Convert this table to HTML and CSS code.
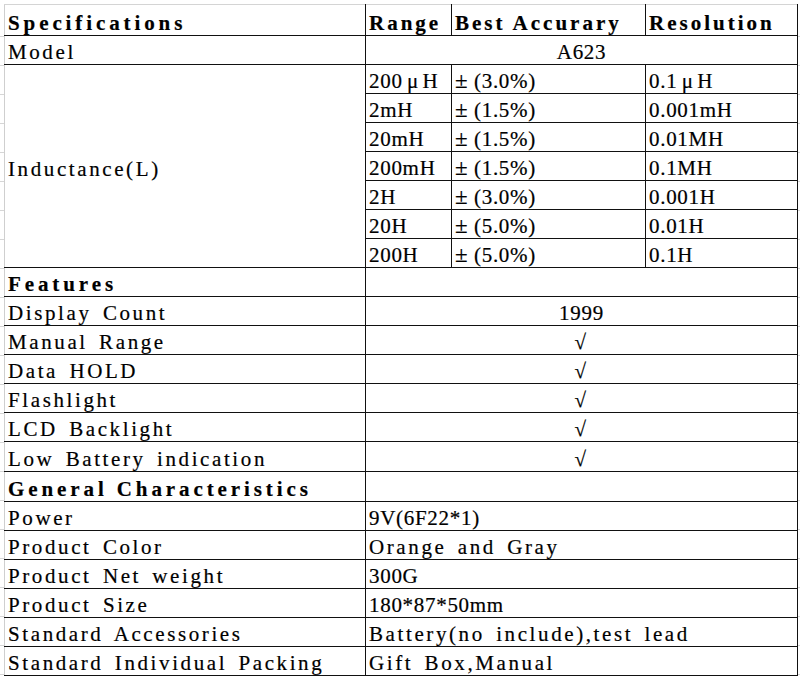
FILE: index.html
```html
<!DOCTYPE html>
<html lang="en">
<head>
<meta charset="utf-8">
<title>Specifications</title>
<link rel="stylesheet" href="styles.css">
</head>
<body>
<div class="sheet">
<table class="spec">
  <colgroup>
    <col class="c-a"><col class="c-b"><col class="c-c"><col class="c-d">
  </colgroup>
  <tr class="head">
    <th class="first">Specifications</th><th class="sub">Range</th><th class="sub">Best Accurary</th><th class="sub">Resolution</th>
  </tr>
  <tr><td class="first">Model</td><td colspan="3" class="center num">A623</td></tr>
  <tr><td class="first middle" rowspan="7">Inductance(L)</td><td class="num">200<span class="wide">μ</span>H</td><td class="num"><span class="pm">±</span>(3.0%)</td><td class="num">0.1<span class="wide">μ</span>H</td></tr>
  <tr><td class="num">2mH</td><td class="num"><span class="pm">±</span>(1.5%)</td><td class="num">0.001mH</td></tr>
  <tr><td class="num">20mH</td><td class="num"><span class="pm">±</span>(1.5%)</td><td class="num">0.01MH</td></tr>
  <tr><td class="num">200mH</td><td class="num"><span class="pm">±</span>(1.5%)</td><td class="num">0.1MH</td></tr>
  <tr><td class="num">2H</td><td class="num"><span class="pm">±</span>(3.0%)</td><td class="num">0.001H</td></tr>
  <tr><td class="num">20H</td><td class="num"><span class="pm">±</span>(5.0%)</td><td class="num">0.01H</td></tr>
  <tr><td class="num">200H</td><td class="num"><span class="pm">±</span>(5.0%)</td><td class="num">0.1H</td></tr>
  <tr><th class="first">Features</th><td colspan="3"></td></tr>
  <tr><td class="first">Display Count</td><td colspan="3" class="center num">1999</td></tr>
  <tr><td class="first">Manual Range</td><td colspan="3" class="center check">√</td></tr>
  <tr><td class="first">Data HOLD</td><td colspan="3" class="center check">√</td></tr>
  <tr><td class="first">Flashlight</td><td colspan="3" class="center check">√</td></tr>
  <tr><td class="first">LCD Backlight</td><td colspan="3" class="center check">√</td></tr>
  <tr class="tall"><td class="first">Low Battery indication</td><td colspan="3" class="center check">√</td></tr>
  <tr class="tall"><th class="first">General Characteristics</th><td colspan="3"></td></tr>
  <tr><td class="first">Power</td><td colspan="3" class="num">9V(6F22*1)</td></tr>
  <tr><td class="first">Product Color</td><td colspan="3">Orange and Gray</td></tr>
  <tr><td class="first">Product Net weight</td><td colspan="3" class="num">300G</td></tr>
  <tr><td class="first">Product Size</td><td colspan="3" class="num">180*87*50mm</td></tr>
  <tr><td class="first">Standard Accessories</td><td colspan="3">Battery(no include),test lead</td></tr>
  <tr><td class="first">Standard Individual Packing</td><td colspan="3">Gift Box,Manual</td></tr>
</table>
</div>
</body>
</html>
```

FILE: styles.css
```css
html, body {
  margin: 0;
  padding: 0;
  background: #ffffff;
}

.sheet {
  width: 800px;
  height: 681px;
  overflow: hidden;
  padding: 4px 0 0 4px;
  box-sizing: border-box;
  background-color: #ffffff;
  background-image: repeating-linear-gradient(180deg, transparent 0, transparent 28px, #d6d6d6 28px, #d6d6d6 29px);
  background-position: 0 8px;
}

.spec {
  border-collapse: collapse;
  table-layout: fixed;
  width: 793px;
  background: #ffffff;
  font-family: "Liberation Serif", "Noto Sans CJK SC", serif;
  font-size: 21px;
  color: #000;
  -webkit-text-stroke: 0.2px #000;
}

.c-a { width: 361px; }
.c-b { width: 86px; }
.c-c { width: 194px; }
.c-d { width: 152px; }

.spec td,
.spec th {
  height: 26px;
  padding: 0 0 2px 3px;
  border: 1px solid #111;
  line-height: 20px;
  vertical-align: bottom;
  text-align: left;
  font-weight: normal;
  letter-spacing: 2.6px;
  word-spacing: 3.5px;
  white-space: nowrap;
  overflow: hidden;
}

.spec th {
  font-weight: bold;
  letter-spacing: 3.9px;
  word-spacing: 0;
}

.spec th.sub {
  letter-spacing: 3px;
}

.spec .num {
  letter-spacing: 0.7px;
  word-spacing: 0;
}

.spec .head th {
  height: 28px;
  border-top: 1px solid #d4d4d4;
}

.spec .first {
  border-left: 1px solid #cfcfcf;
}

.spec .tall td,
.spec .tall th {
  height: 27px;
}

.spec .middle {
  vertical-align: middle;
  padding-top: 8px;
}

.spec .center {
  text-align: center;
  padding-left: 0;
}

.wide {
  display: inline-block;
  width: 20px;
  text-align: center;
  letter-spacing: 0;
}

.pm {
  display: inline-block;
  width: 19px;
  text-align: left;
  letter-spacing: 0;
  font-size: 23px;
}
```
